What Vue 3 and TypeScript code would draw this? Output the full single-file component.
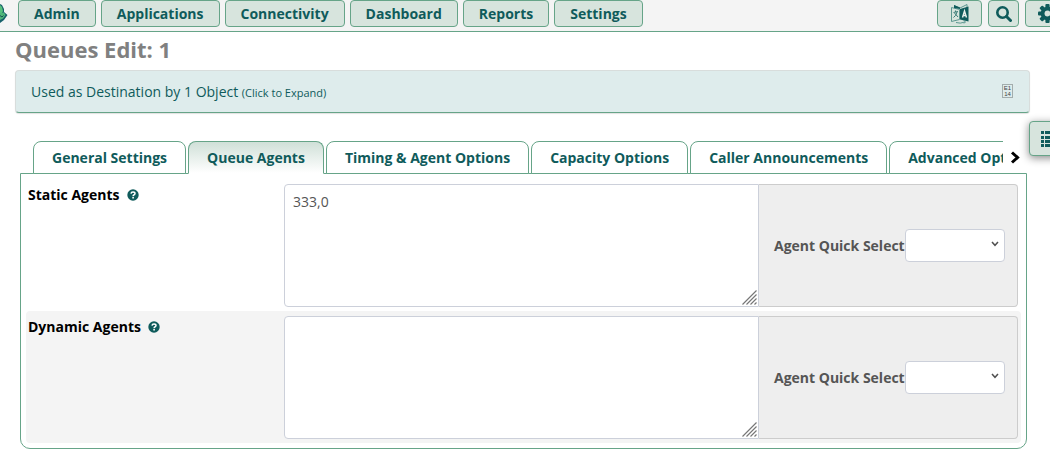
<script setup lang="ts">
import { ref } from 'vue'

interface AgentRow {
  id: string
  label: string
  value: string
}

const menus: string[] = ['Admin', 'Applications', 'Connectivity', 'Dashboard', 'Reports', 'Settings']
const tabs: string[] = [
  'General Settings',
  'Queue Agents',
  'Timing & Agent Options',
  'Capacity Options',
  'Caller Announcements',
  'Advanced Options',
]
const activeTab = ref('Queue Agents')
const rows = ref<AgentRow[]>([
  { id: 'static', label: 'Static Agents', value: '333,0' },
  { id: 'dynamic', label: 'Dynamic Agents', value: '' },
])
</script>

<template>
  <div class="page">
    <header class="topbar">
      <svg class="logo" width="8" height="27" viewBox="0 0 8 27" aria-hidden="true">
        <path d="M0 4 L2 5 L4 9 L4 12 L7.500 15 L4 20 L0 23z" fill="#17616b" />
        <path d="M0 5 L2 7 L3 11 L2 13 L0 13z" fill="#56c07c" />
        <path d="M0 13 L4 12.500 L5.500 15 L3 18.500 L0 20z" fill="#4fb67a" />
        <path d="M0 15.500 L2 17 L3.500 15.500" stroke="#174f55" fill="none" />
      </svg>
      <nav class="menus">
        <button v-for="menu in menus" :key="menu" type="button" class="btn">{{ menu }}</button>
      </nav>
      <div class="tools">
        <button type="button" class="btn tool language" aria-label="Language">
          <svg width="18" height="20" viewBox="0 0 18 20" aria-hidden="true">
            <path d="M.5 3.500 L8.500 5.500 V15.500 L.5 17.500z" fill="none" stroke="#5d9690" />
            <path d="M3 1.500 L9 4 L16 .5 V4 M5 18.500 Q9 20 14 18 M13 16.500 L14.500 18 L13 19.500" fill="none" stroke="#5d9690" />
            <path d="M3 1 L9 3.500 V5 L3 4z M9 5 L17.500 2.500 V17.500 L9 15.500z" fill="#0f5b5b" />
            <path d="M2.500 8.500 L7 7.500 M4.500 6.500 V8 M6 8 Q5 12 2.500 13.500 M3.500 9 L7 13" fill="none" stroke="#3d7d79" />
            <path d="M11.500 13.500 L13.500 7 L15.500 13.500 M12 11.500 H15" fill="none" stroke="#e9f0ec" stroke-width="1.400" />
          </svg>
        </button>
        <button type="button" class="btn tool search" aria-label="Search">
          <svg width="16" height="16" viewBox="0 0 16 16" aria-hidden="true">
            <circle cx="6.500" cy="6.500" r="5.200" fill="none" stroke="#0f5b5b" stroke-width="2.600" />
            <path d="M10.500 10.500 L14.500 14.500" stroke="#0f5b5b" stroke-width="3" stroke-linecap="round" />
          </svg>
        </button>
        <button type="button" class="btn tool gear" aria-label="User settings">
          <svg width="19" height="19" viewBox="0 0 18 18" aria-hidden="true">
            <g fill="#0f5b5b">
              <rect v-for="a in [0, 45, 90, 135]" :key="a" x="7" y="0" width="4" height="18" rx="1" :transform="`rotate(${a} 9 9)`" />
              <circle cx="9" cy="9" r="6.500" />
            </g>
            <circle cx="9" cy="9" r="2.800" fill="#d7e4dd" />
          </svg>
        </button>
      </div>
    </header>

    <main class="content">
      <h1>Queues Edit: 1</h1>

      <button type="button" class="usage">
        <span>Used as Destination by 1 Object <small>(Click to Expand)</small></span>
        <span class="glyph" aria-hidden="true"><span>E1</span><span>14</span></span>
      </button>

      <section class="tabset">
        <div class="tabbar">
          <div class="tabs" role="tablist">
            <button
              v-for="tab in tabs"
              :key="tab"
              type="button"
              role="tab"
              class="tab"
              :class="{ active: tab === activeTab }"
              :aria-selected="tab === activeTab"
              @click="activeTab = tab"
            >{{ tab }}</button>
          </div>
          <button type="button" class="next" aria-label="More tabs">
            <svg width="10" height="14" viewBox="0 0 10 14" aria-hidden="true">
              <path d="M2 1.500 L7.500 6.500 L2 11.500" fill="none" stroke="#000" stroke-width="3" />
            </svg>
          </button>
        </div>

        <div class="panel">
          <div v-for="row in rows" :key="row.id" class="row">
            <div class="name">
              <label :for="row.id">{{ row.label }}</label>
              <svg width="12" height="12" viewBox="0 0 12 12" aria-hidden="true">
                <circle cx="6" cy="6" r="5.700" fill="#0f5b5b" />
                <path d="M4 4.600 Q4.200 3 6 3 Q8 3 8 4.600 Q8 5.500 6.800 6 Q6.100 6.300 6.100 7.200" fill="none" stroke="#fff" stroke-width="1.500" />
                <rect x="5.300" y="8" width="1.600" height="1.500" fill="#fff" />
              </svg>
            </div>
            <div class="group">
              <div class="area">
                <textarea :id="row.id" v-model="row.value"></textarea>
                <svg class="grip" width="15" height="15" viewBox="0 0 15 15" aria-hidden="true">
                  <path d="M.5 14.500 L14.500 .5 M4.500 14.500 L14.500 4.500 M8.500 14.500 L14.500 8.500 M12.500 14.500 L14.500 12.500" stroke="#777" stroke-width="1.200" />
                </svg>
              </div>
              <div class="addon">
                <label :for="`${row.id}-quick`">Agent Quick Select</label>
                <div class="picker">
                  <select :id="`${row.id}-quick`"><option value=""></option></select>
                  <svg class="caret" width="8" height="6" viewBox="0 0 8 6" aria-hidden="true">
                    <path d="M1 1 L4 4.300 L7 1" fill="none" stroke="#505050" stroke-width="1.500" />
                  </svg>
                </div>
              </div>
            </div>
          </div>
        </div>
      </section>
    </main>

    <button type="button" class="drawer" aria-label="Show list">
      <svg width="18" height="17" viewBox="0 0 18 17" aria-hidden="true">
        <g fill="#0f5b5b">
          <template v-for="y in [0, 5, 9, 13]" :key="y">
            <rect x="0" :y="y" width="3" height="3" />
            <rect x="4" :y="y" width="14" height="3" />
          </template>
        </g>
      </svg>
    </button>
  </div>
</template>

<style>
body {
  margin: 0;
  background: #fff;
}
</style>

<style scoped>
.page {
  position: relative;
  overflow: hidden;
  padding-bottom: 10px;
  font-family: "Open Sans", "Noto Sans", sans-serif;
  font-size: 14px;
  line-height: 20px;
  color: #555;
}

.page * {
  box-sizing: border-box;
}

button,
select,
textarea {
  margin: 0;
  font: inherit;
}

svg {
  display: block;
  flex: none;
}

.topbar {
  display: flex;
  height: 32px;
  background: #f4f4f4;
  border-bottom: 1px solid #66a488;
}

.logo {
  margin-right: 10px;
}

.menus {
  display: flex;
  gap: 5px;
}

.btn {
  height: 27px;
  padding: 0 15px;
  border: 1px solid #66a488;
  border-radius: 4px;
  background: #d7e4dd;
  color: #0f5b5b;
  font-weight: 700;
  white-space: nowrap;
}

.tools {
  display: flex;
  gap: 6px;
  margin-left: auto;
  margin-right: -20px;
}

.tool {
  display: flex;
  align-items: center;
  justify-content: center;
  padding: 0;
}

.language,
.gear {
  width: 45px;
}

.search {
  width: 31px;
}

.content {
  padding: 0 20px 0 15px;
}

h1 {
  margin: 0;
  padding: 1px 0 5px;
  font-size: 22px;
  line-height: 32px;
  color: #808080;
}

.usage {
  display: flex;
  align-items: center;
  justify-content: space-between;
  width: 100%;
  height: 43px;
  padding: 2px 16px 0 15px;
  border: 1px solid #d8dddc;
  border-bottom-color: #66a488;
  border-radius: 4px;
  background: #deecec;
  box-shadow: 0 1px 1px #e2e2e2;
  color: #0f5b5b;
  text-align: left;
}

.usage small {
  font-size: 11px;
}

.glyph {
  display: flex;
  flex-direction: column;
  width: 11px;
  height: 14px;
  margin-bottom: 4px;
  border: 1px solid #a3adad;
  font: 6px/6px "Liberation Sans", sans-serif;
  text-align: center;
  color: #444;
}

.tabset {
  margin: 28px 3px 0 5px;
}

.tabbar {
  position: relative;
  display: flex;
  align-items: center;
  margin-bottom: -1px;
  padding: 0 7px 0 13px;
}

.tabs {
  display: flex;
  flex: 1;
  gap: 2px;
  min-width: 0;
  overflow: hidden;
}

.tab {
  flex: none;
  height: 33px;
  padding: 0 18px;
  border: 1px solid #66a488;
  border-radius: 8px 8px 0 0;
  background: #fff;
  color: #0f5b5b;
  font-weight: 700;
}

.tab.active {
  border-bottom-color: #fff;
  background: linear-gradient(#d0e0d8, #fff);
}

.next {
  padding: 0;
  margin-left: 7px;
  border: 0;
  background: none;
}

.panel {
  padding: 5px;
  border: 1px solid #66a488;
  border-radius: 0 0 10px 10px;
}

.row {
  display: grid;
  grid-template-columns: 258px 1fr;
  padding: 5px 3px 4px 0;
  border-radius: 4px;
}

.row:nth-child(even) {
  background: #f4f4f4;
}

.name {
  display: flex;
  align-items: center;
  gap: 7px;
  height: 22px;
  padding-left: 2px;
  color: #000;
  font-weight: 700;
}

.group {
  display: flex;
}

.area {
  position: relative;
  flex: 1;
}

textarea {
  display: block;
  width: 100%;
  height: 123px;
  padding: 7px 8px;
  border: 1px solid #ccd0da;
  border-radius: 4px 0 0 4px;
  background: #fff;
  color: #555;
  resize: none;
}

.grip {
  position: absolute;
  right: 2px;
  bottom: 2px;
}

.addon {
  display: flex;
  align-items: center;
  justify-content: space-between;
  width: 259px;
  padding: 0 12px 0 15px;
  border: 1px solid #ccc;
  border-left: 0;
  border-radius: 0 4px 4px 0;
  background: #eee;
  font-weight: 700;
  white-space: nowrap;
}

.picker {
  position: relative;
}

select {
  display: block;
  width: 100px;
  height: 33px;
  border: 1px solid #ccd0da;
  border-radius: 4px;
  background: #fff;
  appearance: none;
}

.caret {
  position: absolute;
  top: 12px;
  right: 6px;
  pointer-events: none;
}

.drawer {
  position: absolute;
  top: 121px;
  right: -20px;
  width: 41px;
  height: 35px;
  padding: 2px 10px 0 11px;
  border: 1px solid #66a488;
  border-radius: 4px;
  background: #d7e4dd;
  box-shadow: 0 2px 8px #888;
}
</style>
